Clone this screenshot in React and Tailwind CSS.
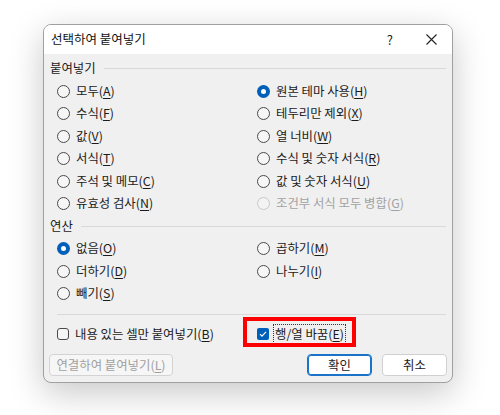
import React from 'react';

const font = { fontFamily: '"Noto Sans CJK KR", "Noto Sans", sans-serif' };

function Radio({ checked, disabled }) {
  if (checked) {
    return (
      <span className="w-[13px] h-[13px] rounded-full bg-[#005fb8] flex items-center justify-center shrink-0">
        <span className="w-[5px] h-[5px] rounded-full bg-white" />
      </span>
    );
  }
  return (
    <span
      className={`w-[13px] h-[13px] rounded-full border shrink-0 ${
        disabled ? 'border-[#c8c8c8] bg-[#f3f3f3]' : 'border-[#4a4a4a] bg-[#f6f6f6]'
      }`}
    />
  );
}

function Label({ text, k }) {
  return (
    <>
      {text}(<span className="underline underline-offset-2">{k}</span>)
    </>
  );
}

function Option({ text, k, checked, disabled }) {
  return (
    <div className="flex items-center h-[22.5px] gap-[6px]">
      <Radio checked={checked} disabled={disabled} />
      <span className={disabled ? 'text-[#a2a2a2]' : 'text-[#1b1b1b]'}>
        <Label text={text} k={k} />
      </span>
    </div>
  );
}

function Section({ title, h }) {
  return (
    <div className={`flex items-center ${h}`}>
      <span className="text-[#1b1b1b]">{title}</span>
      <div className="flex-1 h-px bg-[#d9d9d9] ml-[8px]" />
    </div>
  );
}

export default function App() {
  const paste = [
    ['모두', 'A', false, false, '원본 테마 사용', 'H', true, false],
    ['수식', 'F', false, false, '테두리만 제외', 'X', false, false],
    ['값', 'V', false, false, '열 너비', 'W', false, false],
    ['서식', 'T', false, false, '수식 및 숫자 서식', 'R', false, false],
    ['주석 및 메모', 'C', false, false, '값 및 숫자 서식', 'U', false, false],
    ['유효성 검사', 'N', false, false, '조건부 서식 모두 병합', 'G', false, true],
  ];

  return (
    <div className="w-[500px] h-[415px] bg-white pt-[24px] pl-[43px] text-[12.4px]" style={font}>
      <div className="w-[410px] h-[359px] rounded-[8px] border border-[#a0a0a0] overflow-hidden flex flex-col bg-[#f0f0f0] shadow-[0_10px_34px_rgba(0,0,0,0.22)]">
        <div className="h-[29px] bg-white flex items-center pl-[7px] pr-[15px] shrink-0">
          <span className="text-[12.5px] text-[#111]">선택하여 붙여넣기</span>
          <span className="ml-auto text-[13px] text-[#222] mr-[33px]">?</span>
          <svg width="11" height="11" viewBox="0 0 11 11" className="text-[#222]">
            <path d="M0.5 0.5 L10.5 10.5 M10.5 0.5 L0.5 10.5" stroke="currentColor" strokeWidth="1.1" />
          </svg>
        </div>

        <div className="flex-1 px-[6px] pt-[2px] flex flex-col">
          <Section title="붙여넣기" h="h-[24px]" />
          <div className="grid grid-cols-[200px_1fr] pl-[7px]">
            {paste.map(([a, ak, ac, ad, b, bk, bc, bd]) => (
              <React.Fragment key={ak}>
                <Option text={a} k={ak} checked={ac} disabled={ad} />
                <Option text={b} k={bk} checked={bc} disabled={bd} />
              </React.Fragment>
            ))}
          </div>

          <Section title="연산" h="h-[22.5px]" />
          <div className="grid grid-cols-[200px_1fr] pl-[7px]">
            <Option text="없음" k="O" checked />
            <Option text="곱하기" k="M" />
            <Option text="더하기" k="D" />
            <Option text="나누기" k="I" />
            <Option text="빼기" k="S" />
          </div>

          <div className="ml-[7px] mt-[9px] h-px bg-[#d9d9d9]" />

          <div className="grid grid-cols-[200px_1fr] pl-[7px] mt-[8px] h-[22px]">
            <div className="flex items-center gap-[6px]">
              <span className="w-[12px] h-[12px] rounded-[3px] border border-[#4a4a4a] bg-[#f6f6f6]" />
              <span className="text-[#1b1b1b]">
                <Label text="내용 있는 셀만 붙여넣기" k="B" />
              </span>
            </div>
            <div className="relative flex items-center gap-[4px]">
              <span className="w-[12px] h-[12px] rounded-[2px] bg-[#005fb8] flex items-center justify-center">
                <svg width="8" height="8" viewBox="0 0 8 8">
                  <path d="M1 4.2 L3 6.2 L7 1.8" stroke="white" strokeWidth="1.2" fill="none" />
                </svg>
              </span>
              <span className="text-[#1b1b1b] border border-dotted border-[#333] px-[1px] leading-[18px]">
                <Label text="행/열 바꿈" k="E" />
              </span>
              <div className="absolute left-[-14px] top-[-6px] w-[113px] h-[30px] border-[4px] border-[#ff0000]" />
            </div>
          </div>

          <div className="flex items-center mt-[9px] h-[22px]">
            <button className="w-[124px] h-[22px] -ml-[1px] rounded-[4px] border border-[#d3d3d3] bg-[#f6f6f6] text-[#a0a0a0]">
              <Label text="연결하여 붙여넣기" k="L" />
            </button>
            <button className="ml-auto w-[65px] h-[22px] rounded-[4px] border border-[#1a73c8] bg-white text-[#1b1b1b] shadow-[inset_0_0_0_1px_#1a73c8]">
              확인
            </button>
            <button className="ml-[10px] mr-[-1px] w-[65px] h-[22px] rounded-[4px] border border-[#d0d0d0] bg-white text-[#1b1b1b]">
              취소
            </button>
          </div>
        </div>
      </div>
    </div>
  );
}
